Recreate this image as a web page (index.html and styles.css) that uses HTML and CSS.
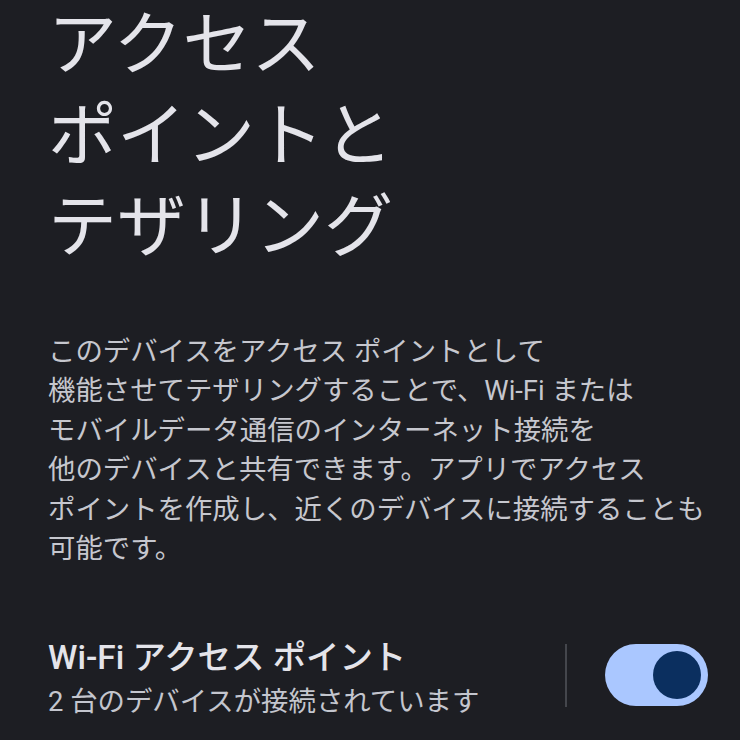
FILE: index.html
```html
<!DOCTYPE html>
<html lang="ja">
<head>
<meta charset="utf-8">
<link rel="stylesheet" href="styles.css">
</head>
<body>
<main class="page">
  <h1 class="title"><span class="title-line first">アクセス</span><span class="title-line">ポイントと</span><span class="title-line">テザリング</span></h1>
  <p class="desc">このデバイスをアクセス ポイントとして<br>機能させてテザリングすることで、Wi-Fi または<br>モバイルデータ通信のインターネット接続を<br>他のデバイスと共有できます。アプリでアクセス<br>ポイントを作成し、近くのデバイスに接続することも<br>可能です。</p>
  <div class="row">
    <div class="row-text">
      <div class="row-title">Wi-Fi アクセス ポイント</div>
      <div class="row-sub">2 台のデバイスが接続されています</div>
    </div>
    <div class="divider"></div>
    <div class="switch"><div class="thumb"></div></div>
  </div>
</main>
</body>
</html>
```
FILE: styles.css
```css
html, body {
  margin: 0;
  padding: 0;
  background: #1d1e23;
}
body {
  width: 740px;
  height: 740px;
  overflow: hidden;
  font-family: "Roboto", "Noto Sans CJK JP", sans-serif;
}
.page {
  padding: 0 32px 0 48px;
}
.title {
  margin: 0;
  font-family: "Noto Sans CJK JP", sans-serif;
  font-weight: 400;
  font-size: 69px;
  line-height: 91px;
  color: #e4e4ea;
}
.title-line {
  display: block;
}
.title-line.first {
  line-height: 79px;
  margin-bottom: 6px;
}
.desc {
  margin: 66px 0 0 0;
  font-size: 27.4px;
  line-height: 39.4px;
  color: #c6c7ce;
  white-space: nowrap;
}
.row {
  display: flex;
  align-items: flex-start;
  margin-top: 71px;
}
.row-text {
  flex: 1;
}
.row-title {
  font-size: 33.4px;
  font-weight: 500;
  line-height: 36px;
  color: #e4e4ea;
}
.row-sub {
  font-size: 27.4px;
  line-height: 40px;
  padding-top: 6px;
  color: #c4c6ce;
}
.divider {
  width: 2px;
  height: 63px;
  margin-top: 4px;
  background: #44464c;
  margin-right: 38px;
}
.switch {
  width: 103px;
  height: 62px;
  margin-top: 4px;
  border-radius: 31px;
  background: #aac7ff;
  display: flex;
  align-items: center;
  justify-content: flex-end;
  padding-right: 7px;
  box-sizing: border-box;
}
.thumb {
  width: 48px;
  height: 48px;
  border-radius: 50%;
  background: #0b2f5f;
}
```
